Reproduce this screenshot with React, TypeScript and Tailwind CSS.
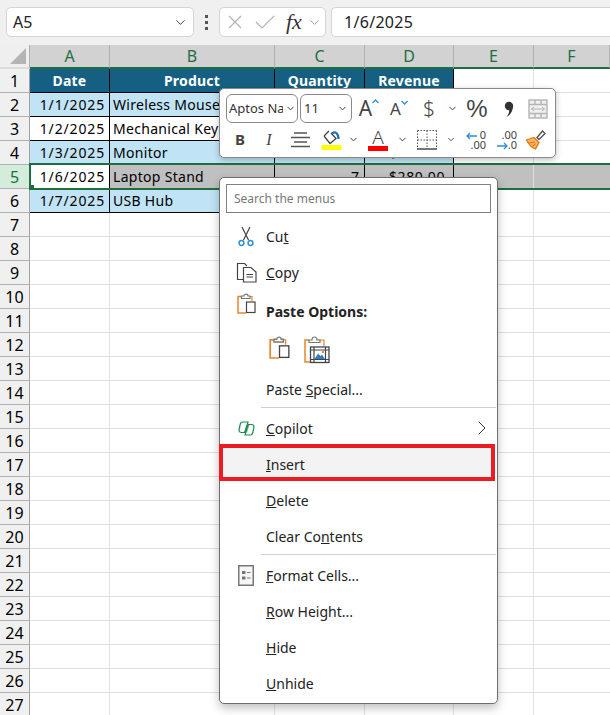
import { ChevronDown, ChevronRight } from "lucide-react";

const FONT = "font-['Noto_Sans',sans-serif]";

const columns = ["A", "B", "C", "D", "E", "F"];

const tableRows = [
    { date: "Date", product: "Product", qty: "Quantity", rev: "Revenue" },
    { date: "1/1/2025", product: "Wireless Mouse", qty: "5", rev: "$125.00" },
    { date: "1/2/2025", product: "Mechanical Keyboard", qty: "3", rev: "$240.00" },
    { date: "1/3/2025", product: "Monitor", qty: "2", rev: "$400.00" },
    { date: "1/6/2025", product: "Laptop Stand", qty: "7", rev: "$280.00" },
    { date: "1/7/2025", product: "USB Hub", qty: "4", rev: "$100.00" },
];

function fillFor(row: number) {
    if (row === 1) return "bg-[#156082] text-white font-bold tracking-[0.2px] border-b-black";
    if (row === 5) return "bg-[#c0c0c0] border-b-black";
    if (row % 2 === 0) return "bg-[#c0e4f5] border-b-black";
    return "bg-white border-b-black";
}

function Cell({ row, col, text }: { row: number; col: number; text: string }) {
    const whiteFirst = row === 5 && col === 0;
    let align = "justify-end pr-[5px]";
    if (row === 1) align = "justify-center";
    else if (col === 1) align = "justify-start pl-[3px] text-[14.5px] tracking-[0.3px]";
    else if (col === 0) align = "justify-end pr-[4px] tracking-[0.85px] text-[14.5px]";
    else if (col === 3) align = "justify-end pr-[8px] tracking-[0.6px] text-[14.5px]";
    return (
        <div
            className={`flex h-6 items-center overflow-hidden whitespace-nowrap border-r border-b border-r-black text-[14px] ${align} ${
                whiteFirst ? "bg-white border-b-black" : fillFor(row)
            }`}
        >
            {text}
        </div>
    );
}

function Sheet() {
    const rows = Array.from({ length: 27 }, (_, i) => i + 1);
    return (
        <div className="grid grid-cols-[30px_80px_165px_90px_89px_80px_1fr] text-[14px] text-black">
            {/* Column headers */}
            <div className="relative h-6 bg-[#efefef] border-r border-[#b0b0b0] border-b-2 border-b-[#dcdcdc]">
                <svg className="absolute left-[9px] top-[2px]" width="18" height="18" viewBox="0 0 18 18">
                    <polygon points="17,1 17,17 1,17" fill="#b4b4b4" />
                </svg>
            </div>
            {columns.map((c) => (
                <div
                    key={c}
                    className="flex h-6 items-center justify-center border-r border-b-2 border-r-[#b0b0b0] border-b-[#1e6e42] bg-[#d2d2d2] text-[16px] text-[#1e6e42]"
                >
                    {c}
                </div>
            ))}
            {rows.map((r) => {
                const data = tableRows[r - 1];
                return (
                    <div key={r} className="contents">
                        <div
                            className={`flex h-6 items-center justify-center border-r border-b border-r-[#a0a0a0] border-b-[#b0b0b0] text-[16px] ${
                                r === 5 ? "bg-[#d3ecdc] text-[#1e6e42]" : "bg-[#f0f0f0] text-black"
                            }`}
                        >
                            {r}
                        </div>
                        {data ? (
                            <>
                                <Cell row={r} col={0} text={data.date} />
                                <Cell row={r} col={1} text={data.product} />
                                <Cell row={r} col={2} text={data.qty} />
                                <Cell row={r} col={3} text={data.rev} />
                            </>
                        ) : (
                            <>
                                <div className="h-6 border-r border-b border-[#e0e0e0]" />
                                <div className="h-6 border-r border-b border-[#e0e0e0]" />
                                <div className="h-6 border-r border-b border-[#e0e0e0]" />
                                <div className="h-6 border-r border-b border-[#e0e0e0]" />
                            </>
                        )}
                        <div className={`h-6 border-r border-b border-[#e0e0e0] ${r === 5 ? "bg-[#c0c0c0]" : ""}`} />
                        <div className={`h-6 border-b border-[#e0e0e0] ${r === 5 ? "bg-[#c0c0c0]" : ""}`} />
                    </div>
                );
            })}
        </div>
    );
}

function FormulaBar() {
    return (
        <div className="flex h-[45px] items-center bg-[#f0f0f0] pb-[1px] pl-[6px] text-[16px] text-[#222]">
            <div className="flex h-[30px] w-[188px] items-center justify-between rounded-[5px] border border-[#d4d4d4] bg-white pl-[6px] pr-[5px]">
                <span>A5</span>
                <ChevronDown size={15} strokeWidth={1.5} className="text-[#333]" />
            </div>
            <div className="flex w-[25px] flex-col items-center gap-[3px]">
                <span className="h-[3px] w-[3px] bg-[#555]" />
                <span className="h-[3px] w-[3px] bg-[#555]" />
                <span className="h-[3px] w-[3px] bg-[#555]" />
            </div>
            <div className="flex h-[30px] w-[107px] items-center rounded-[5px] border border-[#d4d4d4] bg-white pl-[7px]">
                <svg width="16" height="16" viewBox="0 0 16 16" fill="none" stroke="#b4b4b4" strokeWidth="1.2">
                    <path d="M2 2 L14 14 M14 2 L2 14" />
                </svg>
                <svg className="ml-[12px]" width="20" height="16" viewBox="0 0 20 16" fill="none" stroke="#b4b4b4" strokeWidth="1.2">
                    <path d="M1 8 L7 14 L19 2" />
                </svg>
                <span className="ml-[11px] font-['Liberation_Serif',serif] text-[22px] italic leading-none text-[#333]">
                    fx
                </span>
                <ChevronDown size={15} strokeWidth={1.5} className="ml-auto mr-[3px] text-[#999]" />
            </div>
            <div className="ml-[5px] flex h-[30px] flex-1 items-center rounded-l-[5px] border border-r-0 border-[#d4d4d4] bg-white pl-[12px] tracking-[0.3px]">
                1/6/2025
            </div>
        </div>
    );
}

function MiniChevron() {
    return <ChevronDown size={11} strokeWidth={2} className="text-[#333]" />;
}

function Tool({ w, children }: { w: string; children: React.ReactNode }) {
    return <div className={`flex h-full shrink-0 items-center justify-center ${w}`}>{children}</div>;
}

function Toolbar() {
    return (
        <div className="absolute left-[219px] top-[88px] flex h-[70px] w-[337px] flex-col gap-[2px] rounded-[5px] border border-[#8a8a8a] bg-white pl-[6px] pt-[5px] shadow-[0_2px_6px_rgba(0,0,0,0.25)]">
            <div className="flex h-[29px] items-center text-[#333]">
                <div className="flex h-[29px] w-[72px] items-center justify-between overflow-hidden rounded-[6px] border border-[#8a8a8a] pl-[2px] pr-[1px] text-[13px]">
                    <span className="w-[54px] overflow-hidden whitespace-nowrap">Aptos Narrow</span>
                    <MiniChevron />
                </div>
                <div className="ml-[2px] flex h-[29px] w-[52px] items-center justify-between rounded-[6px] border border-[#8a8a8a] pl-[3px] pr-[3px] text-[13px]">
                    <span>11</span>
                    <MiniChevron />
                </div>
                <Tool w="w-[30px] ml-[2px]">
                    <span className="text-[21px] leading-none text-[#444]">A</span>
                    <svg className="-mt-[14px]" width="7" height="5" viewBox="0 0 7 5" fill="none" stroke="#2e8fd6" strokeWidth="1.3">
                        <path d="M0.5 4 L3.5 1 L6.5 4" />
                    </svg>
                </Tool>
                <Tool w="w-[30px]">
                    <span className="text-[17px] leading-none text-[#444]">A</span>
                    <svg className="-mt-[12px]" width="7" height="5" viewBox="0 0 7 5" fill="none" stroke="#2e8fd6" strokeWidth="1.3">
                        <path d="M0.5 1 L3.5 4 L6.5 1" />
                    </svg>
                </Tool>
                <Tool w="w-[30px]">
                    <span className="text-[21px] font-light leading-none text-[#444]">$</span>
                </Tool>
                <Tool w="w-[16px]">
                    <MiniChevron />
                </Tool>
                <Tool w="w-[34px]">
                    <span className="font-['Liberation_Sans',sans-serif] text-[24px] leading-none text-[#444]">%</span>
                </Tool>
                <Tool w="w-[30px]">
                    <svg width="10" height="18" viewBox="0 0 10 18">
                        <circle cx="5" cy="6" r="4.2" fill="#333" />
                        <path d="M9 6 C9 11 6.5 15 2.5 17 C5 13.5 5.5 11 5 9 Z" fill="#333" />
                    </svg>
                </Tool>
                <Tool w="w-[28px]">
                    <svg width="20" height="20" viewBox="0 0 20 20" fill="none" stroke="#b4b4b4" strokeWidth="1.4">
                        <rect x="1" y="1" width="18" height="18" fill="#efefef" />
                        <path d="M1 5.5 H19 M1 14.5 H19 M7 1 V5.5 M13 1 V5.5 M7 14.5 V19 M13 14.5 V19" />
                        <path d="M3.5 10 H16.5 M6 8 L3.5 10 L6 12 M14 8 L16.5 10 L14 12" strokeWidth="1" />
                    </svg>
                </Tool>
            </div>
            <div className="flex h-[29px] items-center text-[#333]">
                <Tool w="w-[28px]">
                    <span className="text-[15px] font-bold leading-none text-[#444]">B</span>
                </Tool>
                <Tool w="w-[30px]">
                    <span className="font-['Liberation_Serif',serif] text-[16px] italic leading-none text-[#444]">I</span>
                </Tool>
                <Tool w="w-[32px]">
                    <svg width="19" height="16" viewBox="0 0 19 16" stroke="#555" strokeWidth="1.4">
                        <path d="M3 1 H16 M0 5.5 H19 M3 10 H16 M0 14.5 H19" />
                    </svg>
                </Tool>
                <Tool w="w-[30px]">
                    <svg width="21" height="21" viewBox="0 0 21 21" fill="none">
                        <path d="M3 7 L8 2 M3 7 L9 14.5 L15 9.5 L10 4" stroke="#444" strokeWidth="1.3" />
                        <path d="M11 4.5 C14 2 17.5 4 17.5 10" stroke="#1f6fb8" strokeWidth="2.2" />
                        <rect x="0.5" y="16" width="20" height="5" fill="#ffff00" />
                    </svg>
                </Tool>
                <Tool w="w-[14px]">
                    <MiniChevron />
                </Tool>
                <Tool w="w-[36px]">
                    <div className="flex flex-col items-center">
                        <span className="text-[19px] font-light leading-[17px] text-[#444]">A</span>
                        <span className="h-[5px] w-[20px] bg-[#ff0000]" />
                    </div>
                </Tool>
                <Tool w="w-[12px]">
                    <MiniChevron />
                </Tool>
                <Tool w="w-[38px]">
                    <svg width="20" height="20" viewBox="0 0 20 20" fill="none" stroke="#555" strokeWidth="1">
                        <path d="M0.5 0.5 H19.5 M0.5 10 H19.5 M0.5 0.5 V19 M19.5 0.5 V19 M10 0.5 V19" strokeDasharray="1.5 1.5" />
                        <path d="M0 19 H20" strokeWidth="1.6" />
                    </svg>
                </Tool>
                <Tool w="w-[10px]">
                    <MiniChevron />
                </Tool>
                <Tool w="w-[40px]">
                    <div className="relative h-[20px] w-[20px] text-[11px] leading-[10px] text-[#444]">
                        <span className="absolute right-0 top-0">0</span>
                        <span className="absolute right-0 top-[10px]">.00</span>
                        <svg className="absolute left-0 top-[2px]" width="11" height="8" viewBox="0 0 11 8" fill="none" stroke="#2e8fd6" strokeWidth="1.3">
                            <path d="M11 4 H1 M4 1 L1 4 L4 7" />
                        </svg>
                    </div>
                </Tool>
                <Tool w="w-[22px]">
                    <div className="relative h-[20px] w-[20px] text-[11px] leading-[10px] text-[#444]">
                        <span className="absolute right-0 top-0">.00</span>
                        <span className="absolute right-0 top-[10px]">.0</span>
                        <svg className="absolute left-0 top-[12px]" width="11" height="8" viewBox="0 0 11 8" fill="none" stroke="#2e8fd6" strokeWidth="1.3">
                            <path d="M0 4 H10 M7 1 L10 4 L7 7" />
                        </svg>
                    </div>
                </Tool>
                <Tool w="w-[36px]">
                    <svg width="20" height="20" viewBox="0 0 20 20" fill="none">
                        <path d="M0.5 10 L8 7.5 L13 12.5 L9.5 19 C6 18 3 14.5 0.5 10 Z" fill="#f9b36a" stroke="#e8760c" strokeWidth="1.3" />
                        <path d="M3 13 L9 12 M6 16.5 L10 13.5" stroke="#e8760c" strokeWidth="1" />
                        <path d="M11 7.5 L13 9.5 L19 3.5 L16.5 1 Z" fill="#fff" stroke="#555" strokeWidth="1.4" />
                    </svg>
                </Tool>
            </div>
        </div>
    );
}

function CutIcon() {
    return (
        <svg width="16" height="21" viewBox="0 0 16 21" fill="none">
            <path d="M4 1 L10.5 14 M12 1 L5.5 14" stroke="#444" strokeWidth="1.2" />
            <circle cx="3.5" cy="17" r="2.4" stroke="#2e8fd6" strokeWidth="1.5" />
            <circle cx="12.5" cy="17" r="2.4" stroke="#2e8fd6" strokeWidth="1.5" />
        </svg>
    );
}

function CopyIcon() {
    return (
        <svg width="21" height="21" viewBox="0 0 21 21" fill="none" stroke="#444" strokeWidth="1.2">
            <path d="M7 17.5 H1.5 V1.5 H8.5 L11 4" />
            <path d="M7.5 5.5 H15 L20 10 V20 H7.5 Z" />
            <path d="M10.5 12.5 H17 M10.5 15 H17" />
        </svg>
    );
}

function PasteIcon() {
    return (
        <svg width="19" height="21" viewBox="0 0 19 21" fill="none">
            <path d="M5 3.5 H1 V20 H9" stroke="#e8862a" strokeWidth="1.5" />
            <path d="M13 3.5 H15 V8" stroke="#e8862a" strokeWidth="1.2" />
            <path d="M4.5 5.5 V3 H7 C7 0.5 11 0.5 11 3 H13 V5.5 Z" stroke="#777" strokeWidth="1.2" fill="#fff" />
            <rect x="9.5" y="9" width="8.5" height="10.5" stroke="#444" strokeWidth="1.2" fill="#fff" />
        </svg>
    );
}

function PastePictureIcon() {
    return (
        <svg width="26" height="29" viewBox="0 0 26 29" fill="none">
            <path d="M5 5 H1 V27 H6" stroke="#e8862a" strokeWidth="1.5" />
            <path d="M14 5 H20 V11" stroke="#e8862a" strokeWidth="1.2" />
            <path d="M5 7.5 V5 H8 C8 1 13 1 13 5 H16 V7.5 Z" stroke="#777" strokeWidth="1.2" fill="#fff" />
            <rect x="6.5" y="12" width="18.5" height="15.5" stroke="#444" strokeWidth="1.3" fill="#fff" />
            <path d="M10 12 V27.5 M21.5 12 V27.5 M6.5 15 H25 M6.5 24.5 H25" stroke="#444" strokeWidth="1.2" />
            <path d="M10.5 24 L14 18.5 L16.5 21 L18 19.5 L21 24 Z" fill="#2e7dc4" />
            <rect x="18" y="16" width="2" height="2" fill="#e8862a" />
        </svg>
    );
}

function CopilotIcon() {
    return (
        <svg width="17" height="15" viewBox="0 0 17 15" fill="none">
            <path d="M8.5 4 H11.5 L9 11.5 H5.5 Z" fill="#6dbb8f" />
            <path d="M4.5 1 H10 L7 11.5 H3.5 C1.7 11.5 0.7 10.3 1.1 8.5 L2.3 3 C2.6 1.7 3.3 1 4.5 1 Z" stroke="#1e8a50" strokeWidth="1.2" />
            <path d="M12.5 14 H7 L10 3.5 H13.5 C15.3 3.5 16.3 4.7 15.9 6.5 L14.7 12 C14.4 13.3 13.7 14 12.5 14 Z" stroke="#1e8a50" strokeWidth="1.2" />
        </svg>
    );
}

function FormatCellsIcon() {
    return (
        <svg width="16" height="21" viewBox="0 0 16 21" fill="none">
            <rect x="0.75" y="0.75" width="14.5" height="19.5" stroke="#777" strokeWidth="1.5" fill="#f6f6f6" />
            <rect x="4" y="6" width="3.5" height="3" fill="#777" />
            <rect x="4" y="11.5" width="3.5" height="3" fill="#777" />
            <path d="M9 7.5 H12.5 M9 13 H12.5" stroke="#777" />
        </svg>
    );
}

function MenuItem({
    icon,
    children,
    right,
}: {
    icon?: React.ReactNode;
    children: React.ReactNode;
    right?: React.ReactNode;
}) {
    return (
        <div className="flex h-9 shrink-0 items-center text-[14px] text-[#222]">
            <div className="flex w-[46px] justify-center pl-[6px]">{icon}</div>
            <span>{children}</span>
            {right ? <div className="ml-auto mr-[3px]">{right}</div> : null}
        </div>
    );
}

function Separator() {
    return <div className="ml-[41px] mr-[1px] h-px shrink-0 bg-[#cfcfcf]" />;
}

function ContextMenu() {
    return (
        <div className="absolute left-[219px] top-[177px] flex h-[527px] w-[279px] flex-col rounded-[5px] border border-[#6e6e6e] bg-white pt-[6px] shadow-[0_4px_10px_rgba(0,0,0,0.25)]">
            <div className="mx-[6px] mb-[5px] flex h-[29px] shrink-0 items-center border border-[#808080] pl-[7px] text-[12px] text-[#777]">
                Search the menus
            </div>
            <MenuItem icon={<CutIcon />}>
                Cu<u>t</u>
            </MenuItem>
            <MenuItem icon={<CopyIcon />}>
                <u>C</u>opy
            </MenuItem>
            <div className="flex h-[39px] shrink-0 pt-[3px] text-[14px] text-[#222]">
                <div className="flex w-[46px] justify-center pl-[6px]">
                    <PasteIcon />
                </div>
                <span className="mt-[9px] font-bold leading-[20px]">Paste Options:</span>
            </div>
            <div className="flex h-[42px] shrink-0 items-start gap-[15px] pl-[50px] pt-[6px]">
                <div className="mt-[2px] scale-110">
                    <PasteIcon />
                </div>
                <PastePictureIcon />
            </div>
            <MenuItem>
                Paste <u>S</u>pecial...
            </MenuItem>
            <Separator />
            <div className="mt-[2px]" />
            <MenuItem icon={<CopilotIcon />} right={<ChevronRight size={24} strokeWidth={1} className="text-[#333]" />}>
                <u>C</u>opilot
            </MenuItem>
            {/* Red highlight drawn round the item */}
            <div className="relative -my-[2px] -ml-px mr-[2px] flex h-[37px] shrink-0 items-center border-[4.5px] border-[#ed1c24] bg-[#f3f3f3] pl-[43px] pt-[3px] text-[14px] text-[#222]">
                <span>
                    <u>I</u>nsert
                </span>
            </div>
            <div className="mt-[3px]" />
            <MenuItem>
                <u>D</u>elete
            </MenuItem>
            <MenuItem>
                Clear Co<u>n</u>tents
            </MenuItem>
            <Separator />
            <div className="mt-[2px]" />
            <MenuItem icon={<FormatCellsIcon />}>
                <u>F</u>ormat Cells...
            </MenuItem>
            <MenuItem>
                <u>R</u>ow Height...
            </MenuItem>
            <MenuItem>
                <u>H</u>ide
            </MenuItem>
            <MenuItem>
                <u>U</u>nhide
            </MenuItem>
        </div>
    );
}

export default function App() {
    return (
        <div className={`relative h-[715px] w-[610px] overflow-hidden bg-white ${FONT}`}>
            <FormulaBar />
            <Sheet />
            {/* Selected row outline */}
            <div className="absolute left-[29px] right-0 top-[163px] h-[27px] border-2 border-r-0 border-[#1e6e42]" />
            <div className="absolute left-[29px] top-[185px] h-[5px] w-[5px] bg-[#1e6e42]" />
            <Toolbar />
            <ContextMenu />
        </div>
    );
}
